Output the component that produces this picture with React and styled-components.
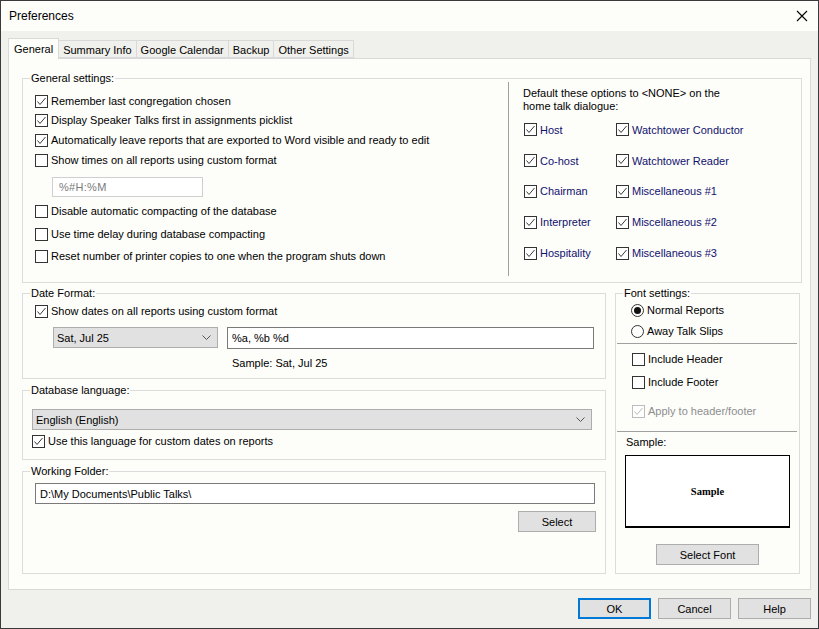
import React from "react";
import styled, { createGlobalStyle } from "styled-components";

const GlobalStyle = createGlobalStyle`
  html, body { margin: 0; padding: 0; background: #f0f0ec; }
  * { box-sizing: border-box; }
  body {
    font-family: "Liberation Sans", Arial, sans-serif;
    font-size: 11px;
    color: #000;
  }
`;

const Window = styled.div`
  width: 819px;
  height: 629px;
  border: 1px solid #3a3a3a;
  background: #f0f0ec;
  display: flex;
  flex-direction: column;
`;

const TitleBar = styled.div`
  height: 30px;
  flex: none;
  background: #fdfdfa;
  display: flex;
  align-items: center;
  justify-content: space-between;
  padding: 0 10px 0 8px;
  font-size: 12px;
`;

const Body = styled.div`
  padding: 7px 7px 0 7px;
  display: flex;
  flex-direction: column;
`;

const TabStrip = styled.div`
  display: flex;
  align-items: flex-end;
  height: 20px;
  position: relative;
  z-index: 1;
`;

const Tab = styled.div`
  height: ${(p) => (p.active ? "21px" : "18px")};
  padding: ${(p) => (p.active ? "0 5px" : "0 4px")};
  margin-left: ${(p) => (p.first ? "0" : "-1px")};
  border: 1px solid #d9d9d9;
  border-bottom: ${(p) => (p.active ? "none" : "1px solid #d9d9d9")};
  background: ${(p) => (p.active ? "#fdfdfa" : "#f0f0ec")};
  display: flex;
  align-items: center;
  padding-top: ${(p) => (p.active ? "0" : "1px")};
  margin-bottom: ${(p) => (p.active ? "-1px" : "0")};
  white-space: nowrap;
  z-index: ${(p) => (p.active ? 2 : 1)};
`;

const Panel = styled.div`
  border: 1px solid #d9d9d9;
  background: #fdfdfa;
  padding: 19px 8px 15px 13px;
  display: flex;
  flex-direction: column;
`;

const Group = styled.div`
  border: 1px solid #dcdcdc;
  display: flex;
  flex-direction: column;
  height: ${(p) => p.h || "auto"};
  flex: ${(p) => (p.grow ? 1 : "none")};
  width: ${(p) => p.w || "auto"};
  padding: ${(p) => p.pad || "0"};
`;

const GroupTitle = styled.div`
  align-self: flex-start;
  margin: -7px 0 0 ${(p) => p.ml || "7px"};
  padding: 0 1px;
  background: #fdfdfa;
  line-height: 13px;
  height: 13px;
`;

const GeneralBody = styled.div`
  display: flex;
  flex: 1;
  margin-top: -3px;
  padding-bottom: 6px;
`;

const LeftCol = styled.div`
  width: 485px;
  padding: 9px 0 0 12px;
  display: flex;
  flex-direction: column;
`;

const Divider = styled.div`
  width: 1px;
  background: #a0a0a0;
`;

const RightCol = styled.div`
  flex: 1;
  padding: 4px 0 0 14px;
`;

const Note = styled.div`
  line-height: 13px;
  width: 210px;
  padding-top: 1px;
`;

const OptGrid = styled.div`
  display: grid;
  grid-template-columns: 92px auto;
  grid-auto-rows: 30.8px;
  margin-top: 1.5px;
  padding-left: 1px;
  align-items: center;
`;

const Row = styled.label`
  display: flex;
  align-items: center;
  height: 20px;
  margin-top: ${(p) => p.mt || "0"};
  padding-left: ${(p) => p.pl || "0"};
  color: ${(p) => (p.disabled ? "#8e8e8e" : p.navy ? "#11116e" : "#000")};
  white-space: nowrap;
  gap: 3px;
`;

const Box = styled.span`
  width: 13px;
  height: 13px;
  flex: none;
  border: 1px solid ${(p) => (p.disabled ? "#bcbcbc" : "#333")};
  background: #fff;
  display: flex;
  align-items: center;
  justify-content: center;
`;

const Radio = styled.span`
  width: 13px;
  height: 13px;
  flex: none;
  border: 1px solid #333;
  border-radius: 50%;
  background: #fff;
  display: flex;
  align-items: center;
  justify-content: center;
  &::after {
    content: "";
    width: 7px;
    height: 7px;
    border-radius: 50%;
    background: ${(p) => (p.on ? "#111" : "transparent")};
  }
`;

const TimeInput = styled.div`
  width: 151px;
  height: 20px;
  margin: 7px 0 0 17px;
  border: 1px solid #cfcfcf;
  background: #fff;
  color: #7a7a7a;
  padding-left: 6px;
  display: flex;
  align-items: center;
  letter-spacing: 0.3px;
`;

const LowerRow = styled.div`
  display: flex;
  margin-top: 10px;
  gap: 9px;
`;

const LowerLeft = styled.div`
  width: 584px;
  display: flex;
  flex-direction: column;
  gap: 11px;
`;

const FieldRow = styled.div`
  display: flex;
  gap: 9px;
  margin: ${(p) => p.m || "0"};
`;

const Select = styled.div`
  width: ${(p) => p.w};
  height: 21px;
  background: #e1e1e1;
  border: 1px solid #adadad;
  display: flex;
  align-items: center;
  justify-content: space-between;
  padding: 0 6px 0 3px;
`;

const TextInput = styled.div`
  width: ${(p) => p.w};
  height: ${(p) => p.h || "22px"};
  border: 1px solid #7a7a7a;
  background: #fff;
  display: flex;
  align-items: center;
  padding-left: 4px;
`;

const SampleLine = styled.div`
  line-height: 13px;
  margin: 8px 0 0 197px;
`;

const Button = styled.div`
  width: ${(p) => p.w || "73px"};
  height: 21px;
  background: #e1e1e1;
  border: ${(p) => (p.primary ? "2px solid #0078d7" : "1px solid #adadad")};
  display: flex;
  align-items: center;
  justify-content: center;
  align-self: ${(p) => p.align || "auto"};
  margin: ${(p) => p.m || "0"};
`;

const Rule = styled.div`
  height: 1px;
  background: #a0a0a0;
  margin: ${(p) => p.m || "0"};
`;

const Caption = styled.div`
  line-height: 13px;
  margin: 4px 0 0 10px;
`;

const SampleBox = styled.div`
  width: 165px;
  height: 73px;
  margin: 6px 0 0 9px;
  border: 1px solid #000;
  border-bottom-width: 2px;
  background: #fff;
  display: flex;
  align-items: center;
  justify-content: center;
  font-family: "Liberation Serif", "Times New Roman", serif;
  font-weight: bold;
  font-size: 10.5px;
`;

const CheckList = styled.div`
  padding-left: 16px;
`;

const Footer = styled.div`
  display: flex;
  justify-content: flex-end;
  gap: 7px;
  padding: 8px 0 0 0;
`;

const Check = ({ disabled }) => (
  <svg width="11" height="11" viewBox="0 0 11 11">
    <polyline
      points="1.5,5.5 4,8.5 9.5,2"
      fill="none"
      stroke={disabled ? "#bcbcbc" : "#3a3a3a"}
      strokeWidth="1"
    />
  </svg>
);

const CheckBox = ({ checked, children, mt, navy, disabled }) => (
  <Row mt={mt} navy={navy} disabled={disabled}>
    <Box disabled={disabled}>{checked && <Check disabled={disabled} />}</Box>
    {children}
  </Row>
);

const Chevron = () => (
  <svg width="9" height="5" viewBox="0 0 9 5">
    <polyline points="0.5,0.5 4.5,4.5 8.5,0.5" fill="none" stroke="#555" strokeWidth="1" />
  </svg>
);

const CloseIcon = () => (
  <svg width="12" height="12" viewBox="0 0 12 12">
    <path d="M1 1 L11 11 M11 1 L1 11" stroke="#000" strokeWidth="1.1" />
  </svg>
);

const tabs = ["General", "Summary Info", "Google Calendar", "Backup", "Other Settings"];

const homeOptions = [
  ["Host", "Watchtower Conductor"],
  ["Co-host", "Watchtower Reader"],
  ["Chairman", "Miscellaneous #1"],
  ["Interpreter", "Miscellaneous #2"],
  ["Hospitality", "Miscellaneous #3"],
];

export default function App() {
  return (
    <>
      <GlobalStyle />
      <Window>
        <TitleBar>
          <span>Preferences</span>
          <CloseIcon />
        </TitleBar>
        <Body>
          <TabStrip>
            {tabs.map((t, i) => (
              <Tab key={t} active={i === 0} first={i === 0}>
                {t}
              </Tab>
            ))}
          </TabStrip>
          <Panel>
            <Group h="205px">
              <GroupTitle>General settings:</GroupTitle>
              <GeneralBody>
                <LeftCol>
                  <CheckBox checked>Remember last congregation chosen</CheckBox>
                  <CheckBox checked mt="-1px">
                    Display Speaker Talks first in assignments picklist
                  </CheckBox>
                  <CheckBox checked>
                    Automatically leave reports that are exported to Word visible and ready to edit
                  </CheckBox>
                  <CheckBox>Show times on all reports using custom format</CheckBox>
                  <TimeInput>%#H:%M</TimeInput>
                  <CheckBox mt="4px">Disable automatic compacting of the database</CheckBox>
                  <CheckBox mt="3px">Use time delay during database compacting</CheckBox>
                  <CheckBox mt="2px">
                    Reset number of printer copies to one when the program shuts down
                  </CheckBox>
                </LeftCol>
                <Divider />
                <RightCol>
                  <Note>Default these options to &lt;NONE&gt; on the home talk dialogue:</Note>
                  <OptGrid>
                    {homeOptions.flat().map((o) => (
                      <CheckBox key={o} checked navy>
                        {o}
                      </CheckBox>
                    ))}
                  </OptGrid>
                </RightCol>
              </GeneralBody>
            </Group>

            <LowerRow>
              <LowerLeft>
                <Group h="86px" pad="0 0 0 12px">
                  <GroupTitle ml="-5px">Date Format:</GroupTitle>
                  <CheckBox checked mt="1px">
                    Show dates on all reports using custom format
                  </CheckBox>
                  <FieldRow m="6px 0 0 18px">
                    <Select w="165px">
                      <span>Sat, Jul 25</span>
                      <Chevron />
                    </Select>
                    <TextInput w="367px">%a, %b %d</TextInput>
                  </FieldRow>
                  <SampleLine>Sample: Sat, Jul 25</SampleLine>
                </Group>

                <Group h="70px" pad="0 0 0 9px">
                  <GroupTitle ml="-2px">Database language:</GroupTitle>
                  <FieldRow m="12px 0 0 0">
                    <Select w="560px">
                      <span>English (English)</span>
                      <Chevron />
                    </Select>
                  </FieldRow>
                  <CheckBox checked mt="1px">
                    Use this language for custom dates on reports
                  </CheckBox>
                </Group>

                <Group grow pad="0 0 0 12px">
                  <GroupTitle ml="-5px">Working Folder:</GroupTitle>
                  <FieldRow m="5px 0 0 0">
                    <TextInput w="560px" h="21px">
                      D:\My Documents\Public Talks\
                    </TextInput>
                  </FieldRow>
                  <Button w="78px" align="flex-start" m="7px 0 0 483px">
                    Select
                  </Button>
                </Group>
              </LowerLeft>

              <Group w="185px" h="281px">
                <GroupTitle>Font settings:</GroupTitle>
                <Row pl="15px">
                  <Radio on />
                  Normal Reports
                </Row>
                <Row mt="1px" pl="15px">
                  <Radio />
                  Away Talk Slips
                </Row>
                <Rule m="2px 2px 0 1px" />
                <CheckList>
                  <CheckBox mt="5px">Include Header</CheckBox>
                  <CheckBox mt="3px">Include Footer</CheckBox>
                  <CheckBox mt="9px" checked disabled>
                    Apply to header/footer
                  </CheckBox>
                </CheckList>
                <Rule m="10px 2px 0 1px" />
                <Caption>Sample:</Caption>
                <SampleBox>Sample</SampleBox>
                <Button w="103px" align="center" m="16px 0 0 0">
                  Select Font
                </Button>
              </Group>
            </LowerRow>
          </Panel>
          <Footer>
            <Button primary>OK</Button>
            <Button>Cancel</Button>
            <Button>Help</Button>
          </Footer>
        </Body>
      </Window>
    </>
  );
}
